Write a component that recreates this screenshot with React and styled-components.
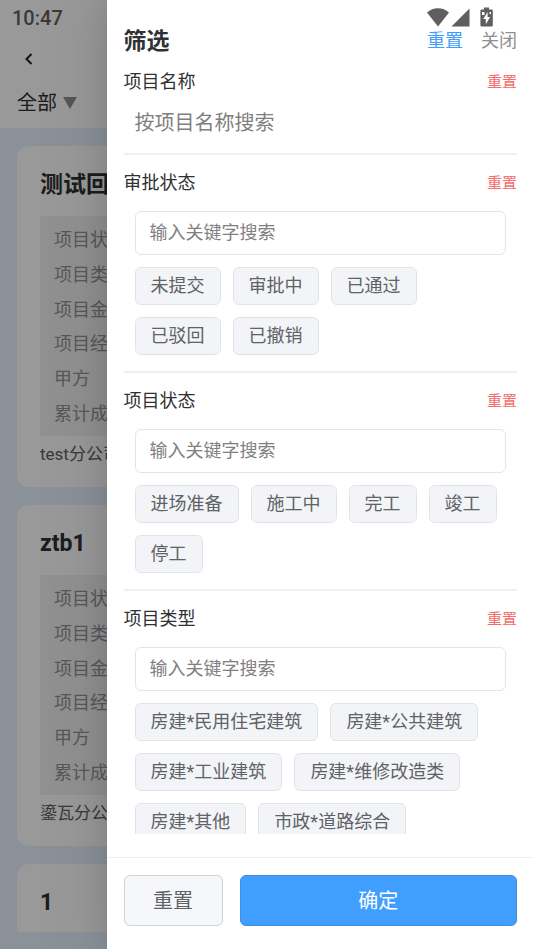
import React, { useState } from 'react';
import styled, { createGlobalStyle } from 'styled-components';

const GlobalStyle = createGlobalStyle`
  * {
    box-sizing: border-box;
  }

  body {
    margin: 0;

    font-family: Roboto, 'Noto Sans CJK SC', sans-serif;
    color: #303133;
  }

  button,
  input {
    font-family: inherit;
  }
`;

const Screen = styled.div`
  position: relative;
  height: 100vh;
  overflow: hidden;
`;

const Page = styled.div`
  display: flex;
  flex-direction: column;

  height: 100%;
  padding-bottom: 17px;

  background-color: #e6f2ff;
`;

const PageHeader = styled.header`
  display: flex;
  flex-direction: column;
  align-items: flex-start;

  height: 128px;
  padding: 6px 17px 0 12px;

  background-color: #ffffff;
`;

const Clock = styled.div`
  font-size: 20px;
  font-weight: 500;
  line-height: 24px;
  color: #5f5f5f;
`;

const BackButton = styled.button`
  display: flex;
  align-items: center;

  height: 36px;
  margin-top: 11px;
  padding: 0 12px;

  background: none;
  border: 0;
`;

const ScopeButton = styled.button`
  display: flex;
  align-items: center;
  gap: 6px;

  margin-top: 12px;
  padding: 0 5px;

  font-size: 20px;
  line-height: 28px;
  color: #303133;

  background: none;
  border: 0;
`;

const CardList = styled.main`
  flex: 1;
  display: flex;
  flex-direction: column;
  gap: 18px;

  min-height: 0;
  padding: 18px 17px 0;
  overflow: hidden;
`;

const Card = styled.article`
  flex-shrink: 0;

  padding: 22px 23px 19px;

  background-color: #ffffff;
  border-radius: 12px;

  &:last-child {
    flex: 1;
    padding-bottom: 0;
    border-radius: 12px 12px 0 0;
  }
`;

const CardTitle = styled.h2`
  margin: 0;

  font-size: 23px;
  font-weight: 700;
  line-height: 34px;
  white-space: nowrap;
`;

const CardFields = styled.ul`
  display: grid;
  grid-auto-rows: 1fr;

  min-height: 220px;
  margin: 14px 0 0;
  padding: 7px 14px 5px;

  font-size: 18px;
  line-height: 24px;
  color: #909399;
  list-style: none;

  background-color: #f2f2f2;

  li {
    display: flex;
    align-items: center;
  }
`;

const CardCompany = styled.div`
  margin-top: 4px;

  font-size: 17px;
  line-height: 28px;
  color: #606266;
  white-space: nowrap;
`;

const Scrim = styled.div`
  position: absolute;
  inset: 0;

  background-color: rgba(0, 0, 0, 0.4);
`;

const Drawer = styled.aside`
  position: absolute;
  top: 0;
  right: 0;
  bottom: 0;

  display: flex;
  flex-direction: column;

  width: 80%;

  background-color: #ffffff;
  box-shadow:
    0 0 64px 8px rgba(0, 0, 0, 0.1),
    0 0 24px rgba(0, 0, 0, 0.1);
`;

const StatusIcons = styled.div`
  position: absolute;
  top: 7px;
  right: 40px;

  display: flex;
  align-items: center;

  svg {
    display: block;
  }
`;

const DrawerHeader = styled.header`
  display: flex;
  align-items: center;
  gap: 18px;

  padding: 26px 16px 0 17px;

  h1 {
    flex: 1;
    margin: 0;
    padding-top: 2px;

    font-size: 23px;
    font-weight: 700;
    line-height: 28px;
  }
`;

const TextButton = styled.button`
  padding: 0;

  font-size: ${({ $small }) => ($small ? '15px' : '18px')};
  line-height: 24px;
  color: ${({ $color }) => $color};

  background: none;
  border: 0;
`;

const DrawerBody = styled.div`
  flex: 1;

  min-height: 0;
  margin: 0 16px 23px 17px;
  overflow: hidden;
`;

const Section = styled.section`
  padding: ${({ $plain }) => ($plain ? '14px 0 8px' : '16px 0')};

  border-bottom: 2px solid #efefef;
`;

const SectionHeader = styled.div`
  display: flex;
  justify-content: space-between;
  align-items: center;

  label {
    font-size: 18px;
    line-height: 24px;
  }
`;

const SectionContent = styled.div`
  display: flex;
  flex-direction: column;
  gap: 12px;

  padding: ${({ $plain }) => ($plain ? '7px' : '16px')} 11px 0;
`;

const SearchInput = styled.input`
  width: 100%;
  height: 44px;
  padding: ${({ $plain }) => ($plain ? '0' : '0 14px 2px')};

  font-size: ${({ $plain }) => ($plain ? '20px' : '18px')};
  color: #303133;

  background-color: #ffffff;
  border: ${({ $plain }) => ($plain ? '0' : '1px solid #e4e5e7')};
  border-radius: 6px;
  outline: none;

  &::placeholder {
    color: #808080;
    opacity: 1;
  }
`;

const TagList = styled.div`
  display: flex;
  flex-wrap: wrap;
  gap: 12px;
`;

const Tag = styled.button`
  height: 38px;
  padding: 0 15px;

  font-size: 18px;
  line-height: 24px;
  color: ${({ $active }) => ($active ? '#409eff' : '#606266')};

  background-color: #f2f4f7;
  border: 1px solid ${({ $active }) => ($active ? '#409eff' : '#e1e3e6')};
  border-radius: 6px;
`;

const DrawerFooter = styled.footer`
  display: flex;
  gap: 17px;

  padding: 17px 16px 23px 17px;

  border-top: 1px solid #ebedf0;
`;

const FooterButton = styled.button`
  flex: ${({ $primary }) => ($primary ? '1' : '0 0 99px')};

  height: 51px;
  padding: 0 0 2px;

  font-size: 20px;
  color: ${({ $primary }) => ($primary ? '#ffffff' : '#606266')};

  background-color: ${({ $primary }) => ($primary ? '#409eff' : '#f5f7fa')};
  border: 1px solid ${({ $primary }) => ($primary ? '#3a8ee6' : '#cfd2d8')};
  border-radius: 6px;
`;

const FIELDS = ['项目状态', '项目类型', '项目金额', '项目经理', '甲方', '累计成本'];

const PROJECTS = [
  { title: '测试回', company: 'test分公司', fields: FIELDS },
  { title: 'ztb1', company: '鎏瓦分公司', fields: FIELDS },
  { title: '1' },
];

const FILTERS = [
  {
    id: 'approval',
    label: '审批状态',
    options: ['未提交', '审批中', '已通过', '已驳回', '已撤销'],
  },
  {
    id: 'status',
    label: '项目状态',
    options: ['进场准备', '施工中', '完工', '竣工', '停工'],
  },
  {
    id: 'type',
    label: '项目类型',
    options: [
      '房建*民用住宅建筑',
      '房建*公共建筑',
      '房建*工业建筑',
      '房建*维修改造类',
      '房建*其他',
      '市政*道路综合',
    ],
  },
];

const ProjectCard = ({ title, company, fields }) => (
  <Card>
    <CardTitle>{title}</CardTitle>
    {fields && (
      <CardFields>
        {fields.map((field) => (
          <li key={field}>{field}</li>
        ))}
      </CardFields>
    )}
    {company && <CardCompany>{company}</CardCompany>}
  </Card>
);

const FilterSection = ({ id, label, options, selected, onSelect }) => {
  const [keyword, setKeyword] = useState('');

  const reset = () => {
    setKeyword('');
    onSelect(id, null);
  };

  return (
    <Section>
      <SectionHeader>
        <label htmlFor={id}>{label}</label>
        <TextButton $small $color="#f56c6c" onClick={reset}>
          重置
        </TextButton>
      </SectionHeader>
      <SectionContent>
        <SearchInput
          id={id}
          value={keyword}
          placeholder="输入关键字搜索"
          onChange={(e) => setKeyword(e.target.value)}
        />
        <TagList>
          {options
            .filter((option) => option.includes(keyword))
            .map((option) => (
              <Tag
                key={option}
                $active={selected === option}
                onClick={() => onSelect(id, option)}
              >
                {option}
              </Tag>
            ))}
        </TagList>
      </SectionContent>
    </Section>
  );
};

const App = () => {
  const [name, setName] = useState('');
  const [selected, setSelected] = useState({});
  const [visible, setVisible] = useState(true);

  const onSelect = (id, option) => {
    setSelected((prev) => ({ ...prev, [id]: option }));
  };

  const onReset = () => {
    setName('');
    setSelected({});
  };

  return (
    <Screen>
      <GlobalStyle />
      <Page>
        <PageHeader>
          <Clock>10:47</Clock>
          <BackButton aria-label="返回">
            <svg width="9" height="14" viewBox="0 0 9 14">
              <path
                d="M7.500 2L2.500 7l5 5"
                fill="none"
                stroke="#222222"
                strokeWidth="2"
              />
            </svg>
          </BackButton>
          <ScopeButton onClick={() => setVisible(true)}>
            全部
            <svg width="14" height="12" viewBox="0 0 14 12">
              <path d="M0 0h14L7 12z" fill="#909090" />
            </svg>
          </ScopeButton>
        </PageHeader>
        <CardList>
          {PROJECTS.map((project) => (
            <ProjectCard key={project.title} {...project} />
          ))}
        </CardList>
      </Page>

      {visible && (
        <>
          <Scrim onClick={() => setVisible(false)} />
          <Drawer>
            <DrawerHeader>
              <h1>筛选</h1>
              <TextButton $color="#409eff" onClick={onReset}>
                重置
              </TextButton>
              <TextButton $color="#909090" onClick={() => setVisible(false)}>
                关闭
              </TextButton>
            </DrawerHeader>
            <DrawerBody>
              <Section $plain>
                <SectionHeader>
                  <label htmlFor="name">项目名称</label>
                  <TextButton $small $color="#f56c6c" onClick={() => setName('')}>
                    重置
                  </TextButton>
                </SectionHeader>
                <SectionContent $plain>
                  <SearchInput
                    $plain
                    id="name"
                    value={name}
                    placeholder="按项目名称搜索"
                    onChange={(e) => setName(e.target.value)}
                  />
                </SectionContent>
              </Section>
              {FILTERS.map((filter) => (
                <FilterSection
                  key={filter.id}
                  {...filter}
                  selected={selected[filter.id]}
                  onSelect={onSelect}
                />
              ))}
            </DrawerBody>
            <DrawerFooter>
              <FooterButton onClick={onReset}>重置</FooterButton>
              <FooterButton $primary onClick={() => setVisible(false)}>
                确定
              </FooterButton>
            </DrawerFooter>
          </Drawer>
        </>
      )}

      <StatusIcons>
        <svg width="66" height="21" viewBox="0 0 66 21" fill="#5f5f5f">
          <path d="M0 5.500C3 2.800 6.800 1.300 11 1.300s8 1.500 11 4.200L11 19.500z" />
          <path d="M42.500 1.500v18h-18z" />
          <path
            fillRule="evenodd"
            d="M57 .5h5v2h2.500q1.300 0 1.300 1.300v14.400q0 1.300-1.300 1.300h-9.800q-1.300 0-1.300-1.300V3.800q0-1.300 1.300-1.300H57zM60.600 5l-4.400 7h2.600v5.200l4.400-7.200h-2.600zM55 5v3h2.500V5zM62.500 5v2h1.500V5z"
          />
        </svg>
      </StatusIcons>
    </Screen>
  );
};

export default App;
